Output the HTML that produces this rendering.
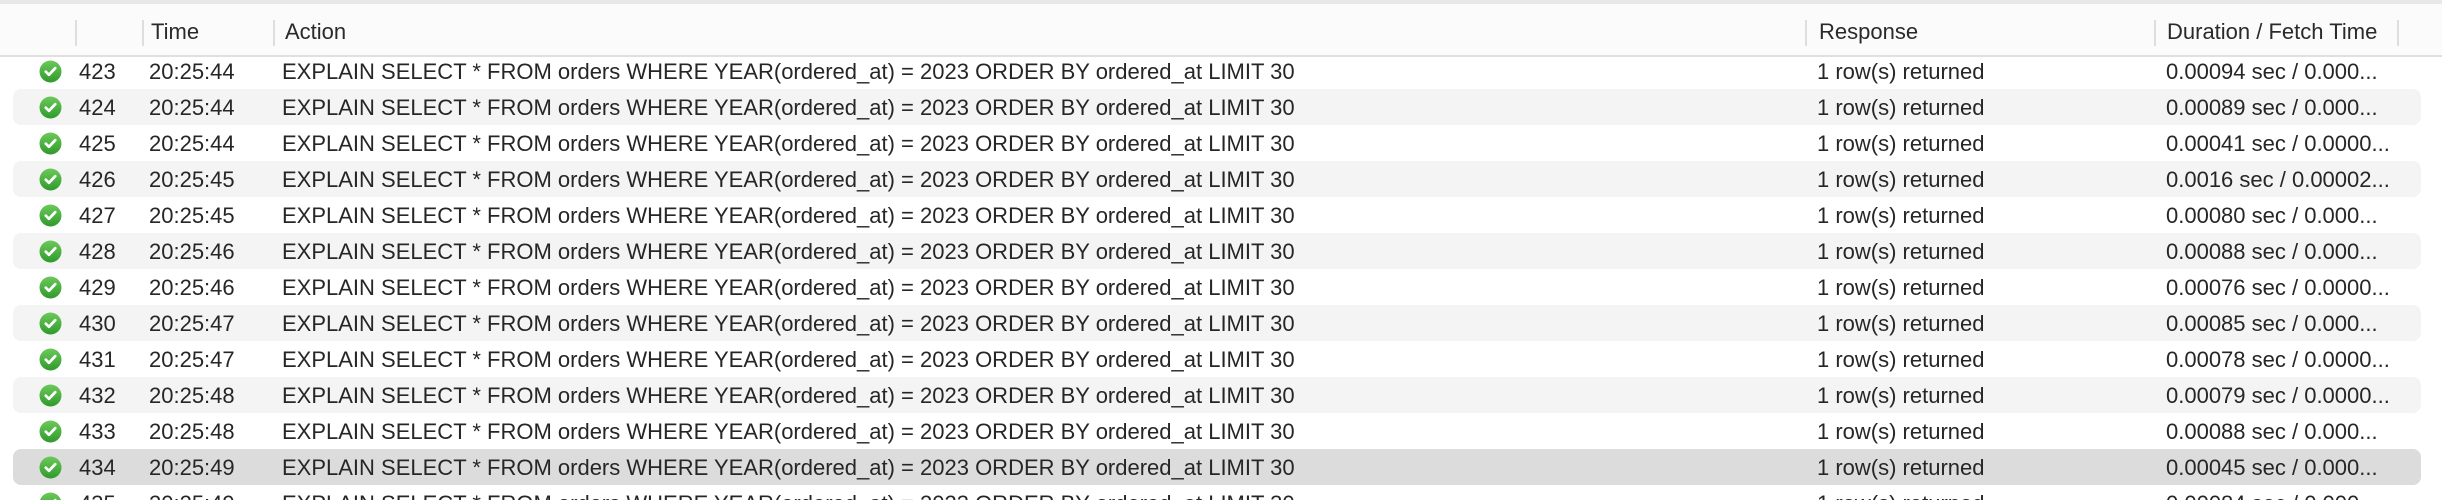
<!DOCTYPE html>
<html><head><meta charset="utf-8"><style>
html,body{margin:0;width:2442px;height:500px;overflow:hidden}
body{background:#fff;font-family:"Liberation Sans",Arial,sans-serif;font-size:22px;color:#262626;position:relative}
.top{position:absolute;left:0;top:0;width:2442px;height:4px;background:#e8e8e8}
.hdr{position:absolute;left:0;top:4px;width:2442px;height:51px;background:#fbfbfb;border-bottom:2px solid #e0e0e0}
.sep{position:absolute;top:16px;width:2px;height:26px;background:#dedede}
.ht{position:absolute;top:15px;color:#2a2a2a}
.row{position:absolute;left:13px;width:2408px;height:36px;border-radius:8px}
.c{position:absolute;line-height:36px;white-space:nowrap}
.ic{position:absolute;left:39px}
</style></head><body>
<div class="top"></div>
<div class="hdr">
<div class="sep" style="left:75px"></div><div class="sep" style="left:142px"></div><div class="sep" style="left:273px"></div><div class="sep" style="left:1805px"></div><div class="sep" style="left:2154px"></div><div class="sep" style="left:2397px"></div>
<div class="ht" style="left:151px">Time</div><div class="ht" style="left:285px">Action</div><div class="ht" style="left:1819px">Response</div><div class="ht" style="left:2167px">Duration / Fetch Time</div>
</div>
<div id="rows"></div>
<script>
var d=[["423","44","0.00094 sec / 0.000..."],["424","44","0.00089 sec / 0.000..."],["425","44","0.00041 sec / 0.0000..."],["426","45","0.0016 sec / 0.00002..."],["427","45","0.00080 sec / 0.000..."],["428","46","0.00088 sec / 0.000..."],["429","46","0.00076 sec / 0.0000..."],["430","47","0.00085 sec / 0.000..."],["431","47","0.00078 sec / 0.0000..."],["432","48","0.00079 sec / 0.0000..."],["433","48","0.00088 sec / 0.000..."],["434","49","0.00045 sec / 0.000..."],["435","49","0.00084 sec / 0.000..."]];
var h="";
d.forEach(function(r,i){var t=53+36*i;var bg=i==11?"#dcdcdc":(i%2==1?"#f4f4f4":"transparent");
h+='<div class="row" style="top:'+t+'px;background:'+bg+'"></div>';
h+='<svg class="ic" style="top:'+(t+7)+'px" width="23" height="23" viewBox="0 0 22 22"><defs><linearGradient id="g'+i+'" x1="0" y1="0" x2="0" y2="1"><stop offset="0" stop-color="#6cc95a"/><stop offset="1" stop-color="#2f9a2c"/></linearGradient></defs><circle cx="11" cy="11" r="10.5" fill="url(#g'+i+')"/><path d="M6.5 11.2l3 3 6-6.4" fill="none" stroke="#fff" stroke-width="2.6" stroke-linecap="round" stroke-linejoin="round"/></svg>';
h+='<div class="c" style="top:'+(t+1)+'px;left:79px">'+r[0]+'</div>';
h+='<div class="c" style="top:'+(t+1)+'px;left:149px">20:25:'+r[1]+'</div>';
h+='<div class="c" style="top:'+(t+1)+'px;left:282px">EXPLAIN SELECT * FROM orders WHERE YEAR(ordered_at) = 2023 ORDER BY ordered_at LIMIT 30</div>';
h+='<div class="c" style="top:'+(t+1)+'px;left:1817px">1 row(s) returned</div>';
h+='<div class="c" style="top:'+(t+1)+'px;left:2166px">'+r[2]+'</div>';});
document.getElementById("rows").innerHTML=h;
</script>
</body></html>
